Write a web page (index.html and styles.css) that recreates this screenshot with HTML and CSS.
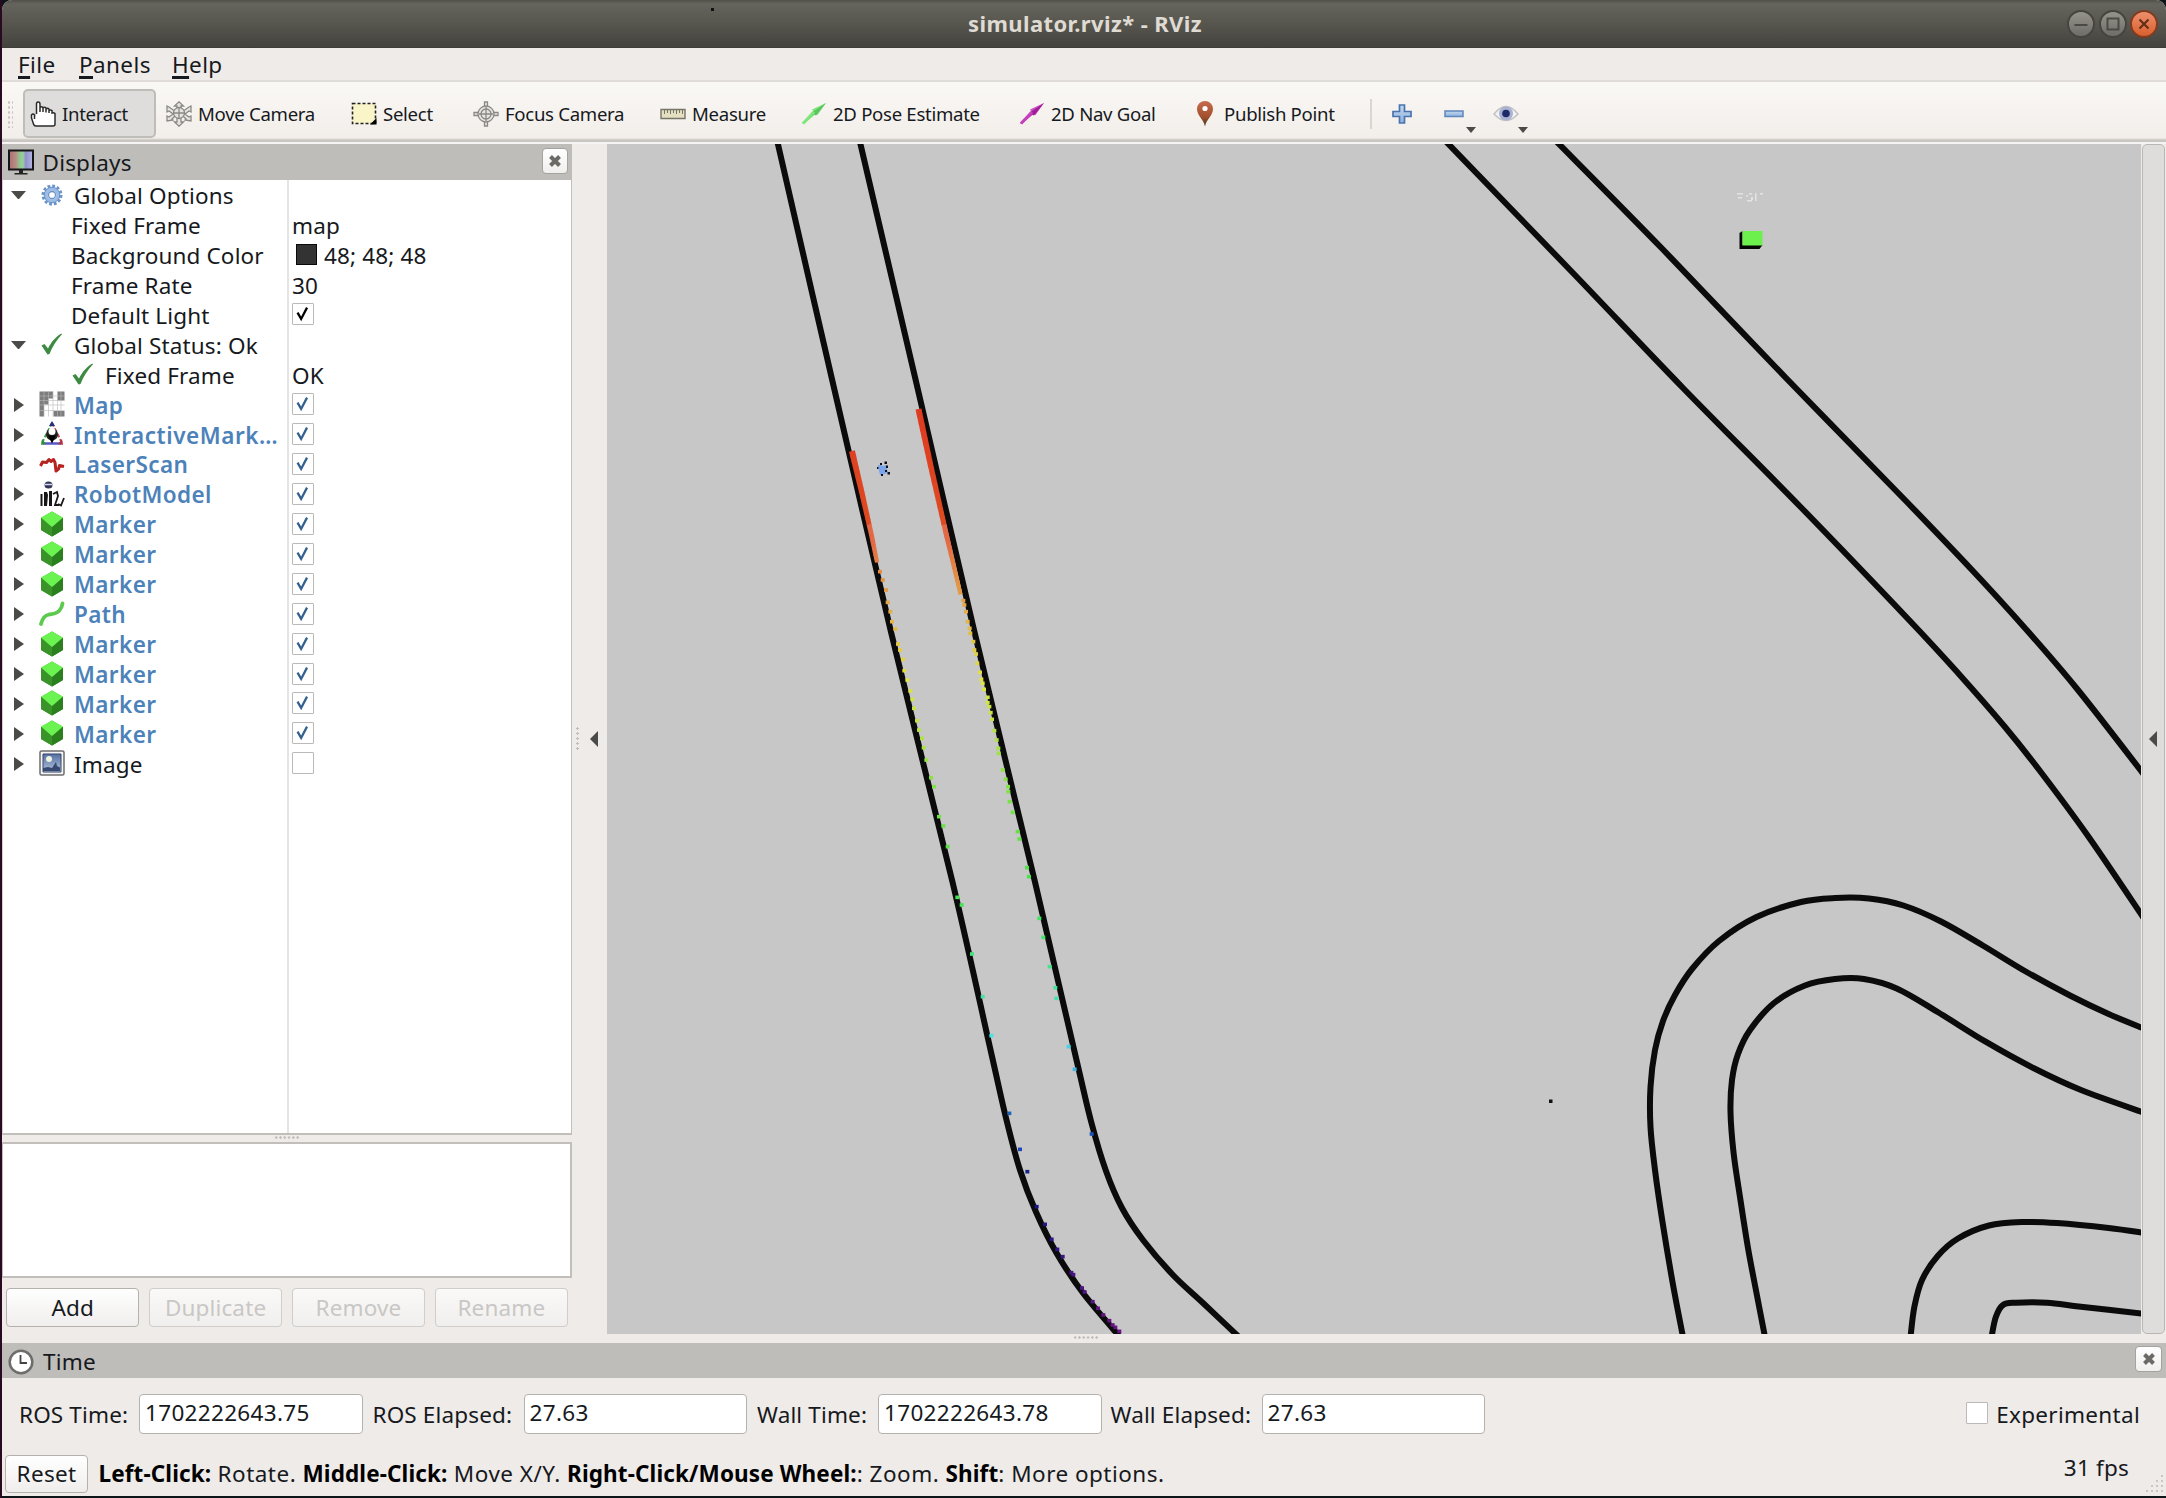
FILE: index.html
```html
<!DOCTYPE html>
<html lang="en">
<head>
<meta charset="utf-8">
<title>simulator.rviz* - RViz</title>
<link rel="stylesheet" href="styles.css">
</head>
<body>
<svg class="defs" aria-hidden="true">
  <defs>
    <linearGradient id="gScreen"><stop offset="0" stop-color="#a96f70"/><stop offset=".3" stop-color="#b98f86"/><stop offset=".42" stop-color="#8cc48c"/><stop offset=".58" stop-color="#9ccf9c"/><stop offset=".7" stop-color="#8f90cc"/><stop offset="1" stop-color="#b6b8e2"/></linearGradient>
    <linearGradient id="gPin" x1="0" y1="0" x2="0" y2="1"><stop offset="0" stop-color="#c76a4e"/><stop offset=".6" stop-color="#a4512f"/><stop offset="1" stop-color="#4a3a20"/></linearGradient>
    <linearGradient id="gBlue" x1="0" y1="0" x2="0" y2="1"><stop offset="0" stop-color="#c3d8f0"/><stop offset="1" stop-color="#8fb2df"/></linearGradient>
    <linearGradient id="gPic" x1="0" y1="0" x2="0" y2="1"><stop offset="0" stop-color="#5570a4"/><stop offset="1" stop-color="#b4c4dc"/></linearGradient>
    <symbol id="check" viewBox="0 0 21 21"><path d="M5 9.500l4 7L15.500 4" fill="none" stroke="currentColor" stroke-width="2.500"/></symbol>
    <symbol id="ok" viewBox="0 0 26 26"><path d="M2.500 14.500l3-1.500 3.500 4.500C12.500 10.500 16.500 6 22.500 2.500l.5.8C17.500 9 13.500 15.500 10.500 23L8.500 23.500z" fill="#3f8a43"/></symbol>
    <symbol id="cube" viewBox="0 0 26 26"><path d="M13 .5L24 7v12L13 25.500 2 19V7z" fill="#2f8a20"/><path d="M13 13l11-6v12l-11 6.500z" fill="#2b801e"/><path d="M2 7l11 6v12.500L2 19z" fill="#3a9329"/><path d="M13 .5L24 6.500l-8 7-3 2.500-3-2.500-8-7z" fill="#6bf451"/></symbol>
    <symbol id="x" viewBox="0 0 14 14"><path d="M2.500 2.500l9 9M11.500 2.500l-9 9" stroke="#6b6a67" stroke-width="4"/></symbol>
  </defs>
</svg>

<div class="desktop">
<div class="window">
  <header class="titlebar">
    <span class="speck"></span>
    <h1>simulator.rviz* - RViz</h1>
    <div class="wm">
      <span class="wmb"><svg viewBox="0 0 28 28"><path d="M7.500 15h13" stroke="#4b4a44" stroke-width="2"/></svg></span>
      <span class="wmb"><svg viewBox="0 0 28 28"><path d="M8.500 8.500h11v11h-11z" fill="none" stroke="#4b4a44" stroke-width="2"/></svg></span>
      <span class="wmb close"><svg viewBox="0 0 28 28"><path d="M9.500 9.500l9 9M18.500 9.500l-9 9" stroke="#5c2e18" stroke-width="2"/></svg></span>
    </div>
  </header>

  <nav class="menubar"><span><u>F</u>ile</span><span><u>P</u>anels</span><span><u>H</u>elp</span></nav>

  <div class="toolbar">
    <i class="grip"></i>
    <div class="tool active"><svg viewBox="0 0 26 26"><path d="M6.500 13V3q0-2 1.700-2t1.800 2v8V6.500q1.500-1.500 3 0V11 7q1.500-1.500 3 0v4.500V8q1.500-1.300 3 0v4-2.500q1.500-1 3 0V12q1.800-.7 3 .5V23q0 2-2 2H6q-2 0-2.500-2L1.500 17v-3q1.500-2 3 0v4" fill="#fff" stroke="#2b2b2b" stroke-width="1.500"/></svg>Interact</div>
    <div class="tool"><svg viewBox="0 0 26 26"><g fill="#e6e4e0" stroke="#8b8986" stroke-width="1.300"><path d="M11 8.500V5H8.500L13 .8 17.500 5H15v3.500M11 16v5H8.500l4.500 4.200 4.500-4.200H15v-5M8 9.500L3 6 1 5v6l2-1 4 3-4 3-2-1v5l6-1-1-1 4-4M18 9.500L23 6l2-1v6l-2-1-4 3 4 3 2-1v5l-6-1 1-1-4-4"/><circle cx="13" cy="12" r="5.500"/><path d="M7.500 12h11M13 6.500v11" fill="none"/></g></svg>Move Camera</div>
    <div class="tool"><svg viewBox="0 0 26 26"><path d="M1.500 2.500h23v20h-23z" fill="#faf5c8" stroke="#222" stroke-width="1.600" stroke-dasharray="3 2"/><path d="M25.500 17v6.500H19z" fill="#000"/></svg>Select</div>
    <div class="tool"><svg viewBox="0 0 26 26"><g fill="#e8e6e2" stroke="#8b8986" stroke-width="1.300"><path d="M11.500 1h3v6h-3zM11.500 19h3v6h-3zM1 11.500h6v3H1zM19 11.500h6v3h-6z"/><circle cx="13" cy="13" r="8"/><circle cx="13" cy="13" r="5"/><path d="M13 6v14M6 13h14" fill="none"/></g></svg>Focus Camera</div>
    <div class="tool"><svg viewBox="0 0 26 26"><path d="M1 8.500h24v9H1z" fill="#e3dfc0" stroke="#777468" stroke-width="1.400"/><path d="M4.500 9v4M7.500 9v3M10.500 9v4M13.500 9v3M16.500 9v4M19.500 9v3M22.500 9v4" stroke="#777468" stroke-width="1"/></svg>Measure</div>
    <div class="tool"><svg viewBox="0 0 26 26"><path d="M1 22.500L12 10l-1-1.500L25 2 16.500 14l-2-1L3 23z" fill="#7fe67c"/><path d="M2.500 23L13 13.500l2 1L25 2 13 10z" fill="#5dc45d"/><path d="M2 22.500L13 11" stroke="#7fe67c" stroke-width="3"/></svg>2D Pose Estimate</div>
    <div class="tool"><svg viewBox="0 0 26 26"><path d="M1 22.500L12 10l-1-1.500L25 2 16.500 14l-2-1L3 23z" fill="#cf4fc4"/><path d="M2.500 23L13 13.500l2 1L25 2 13 10z" fill="#9c1f95"/><path d="M2 22.500L13 11" stroke="#c640bb" stroke-width="3"/></svg>2D Nav Goal</div>
    <div class="tool"><svg viewBox="0 0 26 26"><path d="M13 25.500C11.500 18 5 14.500 5 8a8 8 0 0 1 16 0c0 6.500-6.500 10-8 17.500z" fill="url(#gPin)"/><circle cx="13" cy="7.500" r="2.600" fill="#fff"/></svg>Publish Point</div>
    <div class="extra">
      <svg class="plus" viewBox="0 0 20 20"><path d="M7.500 1h5v6.500H19v5h-6.500V19h-5v-6.500H1v-5h6.500z" fill="url(#gBlue)" stroke="#4a74ad" stroke-width="1.700"/></svg>
      <svg class="minus" viewBox="0 0 20 20"><path d="M1 7h18v5.500H1z" fill="url(#gBlue)" stroke="#5f87bb" stroke-width="1.500"/></svg>
      <i class="drop"></i>
      <svg class="eye" viewBox="0 0 26 20"><path d="M1 10Q13-5 25 10 13 23 1 10z" fill="#f3f3f5" stroke="#c2c1c2" stroke-width="1.500"/><circle cx="13" cy="9.500" r="7" fill="#a9b2d2"/><circle cx="13" cy="9.500" r="3.800" fill="#1d2a66"/></svg>
      <i class="drop"></i>
    </div>
  </div>

  <main class="main">
    <section class="side">
      <header class="dockhead">
        <svg class="monitor" viewBox="0 0 26 28"><path d="M1 1.500h24v19H1z" fill="url(#gScreen)" stroke="#151515" stroke-width="2"/><path d="M11 21h4v3h4.500v1.500h-13V24H11z" fill="#222"/></svg>
        <span>Displays</span>
        <button class="x"><svg><use href="#x"/></svg></button>
      </header>

      <div class="tree">
        <div class="row"><div class="name"><i class="open"></i><svg class="ic" viewBox="0 0 26 26"><g fill="none" stroke="#6a93c9"><circle cx="13" cy="13" r="8.800" stroke-width="3.400" stroke-dasharray="2.700 1.900"/><circle cx="13" cy="13" r="6" stroke-width="3.500" stroke="#9cbce4"/><circle cx="13" cy="13" r="7.800" stroke-width="1"/><circle cx="13" cy="13" r="3.500" stroke-width="1.300"/></g></svg>Global Options</div><div class="val"></div></div>
        <div class="row"><div class="name child">Fixed Frame</div><div class="val">map</div></div>
        <div class="row"><div class="name child">Background Color</div><div class="val"><i class="swatch"></i>48; 48; 48</div></div>
        <div class="row"><div class="name child">Frame Rate</div><div class="val">30</div></div>
        <div class="row"><div class="name child">Default Light</div><div class="val"><i class="cb dark"><svg><use href="#check"/></svg></i></div></div>
        <div class="row"><div class="name"><i class="open"></i><svg class="ic"><use href="#ok"/></svg>Global Status: Ok</div><div class="val"></div></div>
        <div class="row"><div class="name nested"><svg class="ic"><use href="#ok"/></svg>Fixed Frame</div><div class="val">OK</div></div>
        <div class="row on"><div class="name"><i class="shut"></i><svg class="ic" viewBox="0 0 26 26"><path d="M.5.500h13.500v7H9.500v6H5v12H.500zM18.500.500h7v9h-7zM14.500 20h11v5.500h-11z" fill="#7d7d7d"/><path d="M5 .5v25M9.500.500v25M14 .5v25M18.500.500v25M22 .5v25M.5 5h25M.5 9.500h25M.5 14h25M.5 19.500h25" stroke="#b9b9b9" stroke-width=".6"/></svg>Map</div><div class="val"><i class="cb"><svg><use href="#check"/></svg></i></div></div>
        <div class="row on"><div class="name wide"><i class="shut"></i><svg class="ic" viewBox="0 0 26 26"><path d="M13 2L3 22" stroke="#3d9a44" stroke-width="2" stroke-dasharray="4 2"/><path d="M13 2l10 20" stroke="#c0444a" stroke-width="2" stroke-dasharray="4 2"/><path d="M4 22.500h18" stroke="#5757c8" stroke-width="2.500"/><path d="M13 0l3 5h-6z" fill="#27307c"/><path d="M2 24l1-6 4 5z" fill="#2f8f39"/><path d="M24 24l-1-6-4 5z" fill="#b53040"/><circle cx="13" cy="13.500" r="6" fill="#222"/><circle cx="13" cy="10.500" r="3.500" fill="#fff"/><path d="M9 14.500h8l-4 8z" fill="#000"/></svg>InteractiveMark…</div><div class="val"><i class="cb"><svg><use href="#check"/></svg></i></div></div>
        <div class="row on"><div class="name"><i class="shut"></i><svg class="ic" viewBox="0 0 26 26"><path d="M1.500 15l2-4 4 .5L10 8.500l2 2 2.500-2 1.500 3 1 8.500 2.500-2 1-3.500 4.500 1" fill="none" stroke="#b5241f" stroke-width="3" stroke-linejoin="round"/></svg>LaserScan</div><div class="val"><i class="cb"><svg><use href="#check"/></svg></i></div></div>
        <div class="row on"><div class="name"><i class="shut"></i><svg class="ic" viewBox="0 0 26 26"><ellipse cx="9.500" cy="4" rx="4" ry="3.500" fill="#33355a"/><path d="M6 3.500h7" stroke="#d7dbea" stroke-width="1.500"/><path d="M1.500 13h2v12h-2zM5 11h3l1 3-1 11H5zM10 10h3v15h-3z" fill="#171717"/><path d="M14 13l4-2 1 4-3 9h4M19 23l3 1.500L25 17" fill="none" stroke="#171717" stroke-width="1.800"/></svg>RobotModel</div><div class="val"><i class="cb"><svg><use href="#check"/></svg></i></div></div>
        <div class="row on"><div class="name"><i class="shut"></i><svg class="ic"><use href="#cube"/></svg>Marker</div><div class="val"><i class="cb"><svg><use href="#check"/></svg></i></div></div>
        <div class="row on"><div class="name"><i class="shut"></i><svg class="ic"><use href="#cube"/></svg>Marker</div><div class="val"><i class="cb"><svg><use href="#check"/></svg></i></div></div>
        <div class="row on"><div class="name"><i class="shut"></i><svg class="ic"><use href="#cube"/></svg>Marker</div><div class="val"><i class="cb"><svg><use href="#check"/></svg></i></div></div>
        <div class="row on"><div class="name"><i class="shut"></i><svg class="ic" viewBox="0 0 26 26"><path d="M2 23q2-8.500 8-9.500 7-.5 10-3.500 3-3 3.500-7.500" fill="none" stroke="#5cc94f" stroke-width="3.800" stroke-linecap="round"/></svg>Path</div><div class="val"><i class="cb"><svg><use href="#check"/></svg></i></div></div>
        <div class="row on"><div class="name"><i class="shut"></i><svg class="ic"><use href="#cube"/></svg>Marker</div><div class="val"><i class="cb"><svg><use href="#check"/></svg></i></div></div>
        <div class="row on"><div class="name"><i class="shut"></i><svg class="ic"><use href="#cube"/></svg>Marker</div><div class="val"><i class="cb"><svg><use href="#check"/></svg></i></div></div>
        <div class="row on"><div class="name"><i class="shut"></i><svg class="ic"><use href="#cube"/></svg>Marker</div><div class="val"><i class="cb"><svg><use href="#check"/></svg></i></div></div>
        <div class="row on"><div class="name"><i class="shut"></i><svg class="ic"><use href="#cube"/></svg>Marker</div><div class="val"><i class="cb"><svg><use href="#check"/></svg></i></div></div>
        <div class="row"><div class="name"><i class="shut"></i><svg class="ic" viewBox="0 0 26 26"><rect x="1" y="1" width="24" height="24" rx="1.500" fill="#f4f4f4" stroke="#6d6d6d" stroke-width="1.500"/><path d="M4 4h18v18H4z" fill="url(#gPic)" stroke="#35456b"/><circle cx="10" cy="9" r="3" fill="#eef2e0"/><path d="M4 18l5-1 4 1 4-6 1 4 3 1.500V21H4z" fill="#37496f"/></svg>Image</div><div class="val"><i class="cb"></i></div></div>
        <div class="row rest"><div class="name"></div><div class="val"></div></div>
      </div>
      <i class="split"></i>
      <div class="help"></div>
      <div class="buttons"><button class="btn">Add</button><button class="btn" disabled>Duplicate</button><button class="btn" disabled>Remove</button><button class="btn" disabled>Rename</button></div>
    </section>

    <div class="collapse"><i class="vdots"></i><i class="tri"></i></div>
    <div class="canvas">
      <svg id="scene" viewBox="607 144 1534 1190"></svg>
      <i class="split"></i>
    </div>
    <div class="collapse-right"><i class="tri"></i></div>
  </main>

  <footer class="time">
    <header class="dockhead">
      <svg class="clock" viewBox="0 0 26 26"><circle cx="13" cy="13" r="11.300" fill="#fff" stroke="#6d6d6b" stroke-width="2.500"/><path d="M12.500 6v8H19" fill="none" stroke="#444" stroke-width="1.800"/></svg>
      <span>Time</span>
      <button class="x"><svg><use href="#x"/></svg></button>
    </header>
    <div class="fields">
      <label class="l1">ROS Time:</label><output>1702222643.75</output>
      <label class="l2">ROS Elapsed:</label><output>27.63</output>
      <label class="l3">Wall Time:</label><output>1702222643.78</output>
      <label class="l4">Wall Elapsed:</label><output>27.63</output>
      <span class="exp"><i class="cb"></i>Experimental</span>
    </div>
    <div class="status">
      <button class="btn reset">Reset</button>
      <p><b>Left-Click:</b> Rotate. <b>Middle-Click:</b> Move X/Y. <b>Right-Click/Mouse Wheel:</b>: Zoom. <b>Shift</b>: More options.</p>
      <span class="fps">31 fps</span>
      <svg class="sizegrip" viewBox="0 0 18 18"><path d="M15 1h2v2h-2zM10 6h2v2h-2zM15 6h2v2h-2zM5 11h2v2H5zM10 11h2v2h-2zM15 11h2v2h-2zM0 16h2v2H0zM5 16h2v2H5zM10 16h2v2h-2zM15 16h2v2h-2z" fill="#c9c6c2"/></svg>
    </div>
  </footer>
</div>
</div>
<script src="scene.js"></script>
</body>
</html>
```
FILE: styles.css
```css
* { box-sizing: border-box; }
body { margin: 0; width: 2166px; height: 1498px; overflow: hidden; font: 22.5px/30px "Noto Sans", "Liberation Sans", sans-serif; letter-spacing: .15px; color: #16191d; }
button { font: inherit; letter-spacing: inherit; color: inherit; padding: 0; }
svg { display: block; flex: none; }
i { font-style: normal; flex: none; display: block; }
.defs { position: absolute; width: 0; height: 0; }
.desktop { width: 2166px; height: 1498px; padding: 0 0 2px 2px; background: linear-gradient(90deg, #2a0a20 2px, #0d1519 2px); }
.window { height: 1496px; display: flex; flex-direction: column; background: #efebe8; border-radius: 10px 10px 0 0; overflow: hidden; }

.titlebar { position: relative; height: 48px; flex: none; display: flex; align-items: center; justify-content: center; background: linear-gradient(#504f49 0, #66655d 4px, #5e5d55 14px, #45433e 47px, #3b3935 48px); }
.titlebar h1 { margin: 0 0 2px 2px; font-size: 22px; font-weight: 700; letter-spacing: .4px; color: #dfdbd2; }
.speck { position: absolute; left: 709px; top: 8px; width: 3px; height: 3px; background: #111; }
.wm { position: absolute; right: 8px; top: 10px; display: flex; gap: 3.500px; }
.wmb { width: 28px; height: 28px; border-radius: 50%; background: linear-gradient(#95938c, #6f6d67); border: 2px solid #46443f; }
.wmb svg { margin: -2px; width: 28px; height: 28px; }
.wmb.close { background: linear-gradient(#ee8f6d, #d95f2c); border-color: #803c20; }

.menubar { height: 34px; flex: none; display: flex; padding: 2px 0 0 16px; border-bottom: 2px solid #dedbd8; background: #efebe8; }
.menubar span { letter-spacing: .4px; }
.menubar span:nth-child(1) { width: 61px; }
.menubar span:nth-child(2) { width: 93px; }
.menubar u { text-decoration-thickness: 2.5px; text-underline-offset: 2.5px; }

.toolbar { height: 62px; flex: none; display: grid; grid-template-columns: 21px 143px 185px 122px 187px 141px 218px 173px 178px 1fr; align-items: center; padding-top: 3px; border-bottom: 2px solid #f7f5f3; background: linear-gradient(#faf8f5, #f2eeea 56px, #c9c6c2 58px, #c9c6c2 60px); font-size: 18.600px; letter-spacing: -.3px; }
.grip { width: 6px; height: 28px; margin-left: 5px; background: radial-gradient(circle, #c9c6c2 1px, transparent 1.400px) 0 0 / 4px 5px; }
.tool { display: flex; align-items: center; gap: 6px; }
.tool svg { width: 26px; height: 26px; }
.tool.active { width: 133px; height: 49px; padding-left: 5px; border: 2px solid #bfbdba; border-radius: 5px; background: #dedddb; }
.extra { display: flex; align-items: center; height: 30px; padding-left: 20px; border-left: 2px solid #d9d6d2; }
.plus { width: 20px; height: 20px; }
.minus { width: 20px; height: 20px; margin-left: 32px; }
.eye { width: 26px; height: 20px; margin-left: 17px; }
.drop { margin-top: 32px; margin-left: 2px; border: 5.500px solid transparent; border-top: 6px solid #4b4a48; border-bottom: 0; }
.eye + .drop { margin-left: -1px; }

.main { height: 1199px; flex: none; display: flex; }
.side { width: 570px; display: flex; flex-direction: column; }
.dockhead { height: 36px; flex: none; display: flex; align-items: center; padding: 2px 4px 0 6px; background: #bfbdb9; }
.dockhead span { flex: 1; letter-spacing: .2px; }
.monitor { width: 26px; height: 28px; margin-right: 8.500px; }
.clock { width: 26px; height: 26px; margin-right: 9px; }
.x { width: 26px; height: 26px; margin-top: -5px; display: grid; place-items: center; border: 1px solid #a5a39f; border-radius: 4px; background: linear-gradient(#fff, #f0efee); }
.x svg { width: 14px; height: 14px; }

.tree { height: 955px; flex: none; display: flex; flex-direction: column; border-right: 1.500px solid #c2bfbb; border-bottom: 2px solid #c2bfbb; border-left: 1px solid #d4d1cd; background: #fff; }
.row { height: 29.950px; flex: none; display: grid; grid-template-columns: 286px 1fr; line-height: 30px; }
.row.rest { flex: 1; height: auto; }
.name { display: flex; align-items: center; border-right: 2px solid #e4e4e4; padding: 1px 0 0 8px; white-space: nowrap; }
.name .ic { width: 26px; height: 26px; margin: -3px 9px 0 0; }
.name.child { padding-left: 68px; }
.name.nested { padding-left: 67px; }
.val { display: flex; align-items: center; padding: 1px 0 0 3px; }
.on .name { font-weight: 600; color: #4c82b9; letter-spacing: .4px; }
.on .name.wide { letter-spacing: .55px; }
.open { width: 15px; margin-right: 13px; border: 7.500px solid transparent; border-top: 8px solid #4b4a48; border-bottom: 0; }
.shut { margin: 0 15px 0 3px; border: 7px solid transparent; border-left: 10px solid #4b4a48; border-right: 0; }
.shut, .open { position: relative; top: -1px; }
.swatch { width: 21px; height: 21px; margin: -2px 7px 0 4px; background: #333; border: 1.500px solid #0a0a0a; }
.cb { width: 22px; height: 22px; margin-top: -3px; border: 1.500px solid #bcbab8; border-radius: 1px; background: #fff; color: #33618f; }
.cb svg { width: 19px; height: 19px; }
.cb.dark { color: #000; }
.split { width: 26px; height: 3px; margin: 1px auto 3px; background: radial-gradient(circle, #bfbcb8 1px, transparent 1.400px) 0 0 / 4.300px 3px; }
.help { height: 136px; border: 2px solid #c2bfbb; border-left-width: 1px; background: #fff; }
.buttons { display: flex; gap: 9.500px; padding: 10px 4px 0; }
.btn { width: 134px; height: 39px; border: 1.500px solid #b5b2ae; border-radius: 4px; background: linear-gradient(#fff, #f0eeed); }
.btn:disabled { color: #c8c7c5; border-color: #d0cdca; background: linear-gradient(#faf9f8, #f1efed); }

.collapse { width: 35px; display: flex; align-items: center; padding: 0 9px 10px 4px; justify-content: space-between; }
.vdots { width: 3px; height: 26px; background: radial-gradient(circle, #bfbcb8 1px, transparent 1.400px) 0 0 / 3px 5px; }
.tri { border: 8px solid transparent; border-right: 8px solid #4b4a48; border-left: 0; }
.canvas { width: 1534px; }
.canvas > svg { width: 1534px; height: 1190px; background: #c7c7c7; }
.canvas .split { margin: 2px 0 0 466px; }
.collapse-right { width: 23px; height: 1190px; margin-left: 1px; padding-right: 2px; display: grid; place-items: center; border: 1.500px solid #b9b7b4; border-radius: 5px; background: #dedddb; }

.time .dockhead { height: 35px; padding-right: 4px; }
.time .x { width: 27px; }
.fields { height: 72px; display: flex; align-items: center; padding-left: 17px; }
.fields label { padding-top: 2px; white-space: nowrap; }
.fields output { width: 223.500px; height: 40px; padding: 2px 0 0 5px; line-height: 32px; letter-spacing: .32px; border: 1.500px solid #b5b2ae; border-radius: 4px; background: #fff; }
.l1 { width: 120px; }
.l2 { width: 161px; padding-left: 10px; }
.l3 { width: 131px; padding-left: 10px; }
.l4 { width: 160px; padding-left: 9px; }
.exp { margin: 1px 26px 0 auto; display: flex; align-items: center; gap: 8px; letter-spacing: .3px; }
.status { height: 46px; display: flex; align-items: center; padding: 0 0 0 3px; }
.reset { width: 83px; height: 38px; margin-top: 2px; letter-spacing: .3px; }
.status p { margin: 1px 0 0 10.500px; letter-spacing: .48px; white-space: pre; }
.status b { color: #000; letter-spacing: .12px; }
.fps { margin: -10px 37px 0 auto; letter-spacing: .2px; }
.sizegrip { width: 18px; height: 18px; margin: 20px 2px 0 -20px; }
```
FILE: scene.js
```js
const scene = document.getElementById('scene');
const NS = 'http://www.w3.org/2000/svg';

function add(tag, attrs) {
  const el = document.createElementNS(NS, tag);
  for (const k in attrs) el.setAttribute(k, attrs[k]);
  scene.appendChild(el);
}

// Walls of the occupancy map.
const walls = [
  [777,140, 834.5,390, 891,632, 952.5,882, 991,1052, 1006.5,1120, 1020,1170, 1036,1212, 1056.5,1253, 1083,1293, 1120,1337],
  [859.5,140, 918,390, 974,630, 1035,882, 1076.5,1060, 1091.5,1123, 1106,1171, 1122,1208, 1143,1240, 1173,1275, 1203,1303, 1239,1337],
  [1444.5,140, 1573,273, 1683,388, 1800.6,507, 1910,621, 1958,673, 2005,727, 2040,771, 2088,836, 2145,920],
  [1555,140, 1663,249.5, 1786,378, 1905,500, 1972,570, 2024,627, 2078,690, 2145,776],
  [1683,1337, 1672.7,1283, 1662.5,1222, 1655,1170, 1650.5,1127, 1650.5,1087, 1655,1050, 1663,1021, 1675,995, 1692,969, 1719,941, 1756.5,917, 1801,902, 1835,898, 1869,898.5, 1903.5,905.5, 1941,921.5, 1982,945, 2026.6,972, 2071,996, 2108.6,1014, 2145,1029],
  [1765,1337, 1756.5,1293, 1748,1248, 1740,1197, 1733.6,1153, 1730.5,1112, 1732,1080, 1738,1054, 1750,1030, 1774,1003, 1805,985.500, 1835,979, 1864,979, 1896.7,988.5, 1937.7,1012, 1985.6,1041.7, 2033.4,1068, 2081,1090, 2145,1113],
  [1910.5,1337, 1914.4,1306.7, 1922,1280, 1937.7,1256, 1958,1238.500, 1989,1225.5, 2023,1222, 2057,1223, 2108.6,1228, 2145,1233],
  [1991.5,1337, 1995.8,1317, 2003,1305, 2016,1302.7, 2047,1302.7, 2081,1306.7, 2145,1314]
];

function smooth(flat) {
  const p = [];
  for (let i = 0; i < flat.length; i += 2) p.push([flat[i], flat[i + 1]]);
  let d = `M${p[0]}`;
  for (let i = 0; i < p.length - 1; i++) {
    const a = p[i - 1] || p[i], b = p[i], c = p[i + 1], e = p[i + 2] || c;
    d += `C${b[0] + (c[0] - a[0]) / 6},${b[1] + (c[1] - a[1]) / 6} ${c[0] - (e[0] - b[0]) / 6},${c[1] - (e[1] - b[1]) / 6} ${c}`;
  }
  return d;
}
for (const w of walls) add('path', { d: smooth(w), fill: 'none', stroke: '#0b0b0b', 'stroke-width': 6 });

// Laser returns: colour runs from red near the robot to violet far away.
const ramp = [[400,8], [540,14], [575,28], [640,48], [700,66], [780,95], [890,122], [1000,158], [1060,195], [1120,215], [1200,240], [1300,275], [1340,290]];
function colour(y) {
  let i = 1;
  while (i < ramp.length - 1 && ramp[i][0] < y) i++;
  const [y0, h0] = ramp[i - 1], [y1, h1] = ramp[i];
  const h = h0 + (h1 - h0) * (y - y0) / (y1 - y0);
  return `hsl(${h} 74% ${y < 520 ? 50 : y < 1080 ? 58 : y < 1170 ? 42 : 30}%)`;
}
function beam(pts) {
  for (let i = 0; i < pts.length - 1; i++) {
    const [x0, y0] = pts[i], [x1, y1] = pts[i + 1], n = 8;
    for (let k = 0; k < n; k++) {
      const f = k / n, g = (k + 1) / n, y = y0 + (y1 - y0) * f;
      add('line', { x1: x0 + (x1 - x0) * f, y1: y, x2: x0 + (x1 - x0) * g, y2: y0 + (y1 - y0) * g + .5, stroke: colour(y), 'stroke-width': 6 - 2.5 * (i + f) / pts.length });
    }
  }
}
beam([[852,451], [862,493], [871.5,535], [877,562]]);
beam([[918.5,409], [931,467], [946,533], [952.5,560], [960.5,594]]);

const hits = [
  [180,545],[188,570],[198,600],[203,637],[211,665],[216,695],[226,717],[234,762],[240,780],[249,808],[253,842],[262,870],[271,903],[277,928],[282,955],[291,992],[297,1020],[306,1045],[311,1073],[319,1110],[333,1163],[342,1190],[357,1280],[370,1308],[383,1370],
  [430,632],[433,645],[438,665],[443,695],[449,715],[451,730],[460,755],[463,780],[468,792],[472,820],[480,847],[484,868],[488,880],[492,898],[503,922],[503,938],[508,950],[512,968],[516,988],[523,1022],[530,1050],[535,1075],[536,1090],[548,1140],[557,1168],[564,1190],[565,1205],[569,1235],[578,1267],[593,1325],[598,1347],[621,1433],[627,1460],
  [412,1522],[425,1545],[456,1692],[488,1820],[514,1937],[568,2170],[600,2278],[622,2345],[650,2450],[675,2503],[695,2548],[712,2578],[728,2600],[754,2648],[760,2654],[786,2694],[794,2706],[818,2735],[834,2755],[850,2775],[868,2792],[878,2805],[886,2812],[898,2824],
  [658,1585],[670,1642],[689,1730],[706,1793],[709,1825],[746,1970],[764,2038],[815,2232]
];
for (const [hx, hy] of hits) {
  const x = 820 + hx / 3, y = 390 + hy / 3;
  add('rect', { x: x - 2, y: y - 1.8, width: 4, height: 3.6, fill: colour(y) });
}

// Robot.
add('path', { d: 'M878 465h3l2 1 3-1 1 4 1 3-3 2-5 1-1-4z', fill: '#7aa5ea' });
add('path', { d: 'M884.500 461.500h2.500v2.500h-2.500zM880 463h2v2h-2zM886 465.500h2v2.500h-2zM877 467h1.500v2H877zM887.500 472h2.500v2.500h-2.500zM881 474h2v2h-2zM885 470h2v2h-2z', fill: '#0b0f1c' });

// Goal cube with its label, and a stray map cell.
add('path', { d: 'M1739.500 233l3-2v14h20l-3 4h-20z', fill: '#050505' });
add('rect', { x: 1742.5, y: 231, width: 20, height: 14.5, fill: '#6cf04d' });
add('path', { d: 'M1737 193h6v1.500h-6zM1738 197h4v1.500h-4zM1746 195h2v1.500h-2zM1749 193h3v1.500h-3zM1751 197h2v3h-2zM1747 200h5v1.500h-5zM1755 193h1.500v8h-1.500zM1760 193h3v1.500h-3z', fill: '#e3e3e3' });
add('rect', { x: 1549, y: 1099.5, width: 3.5, height: 3.5, fill: '#111' });
```
